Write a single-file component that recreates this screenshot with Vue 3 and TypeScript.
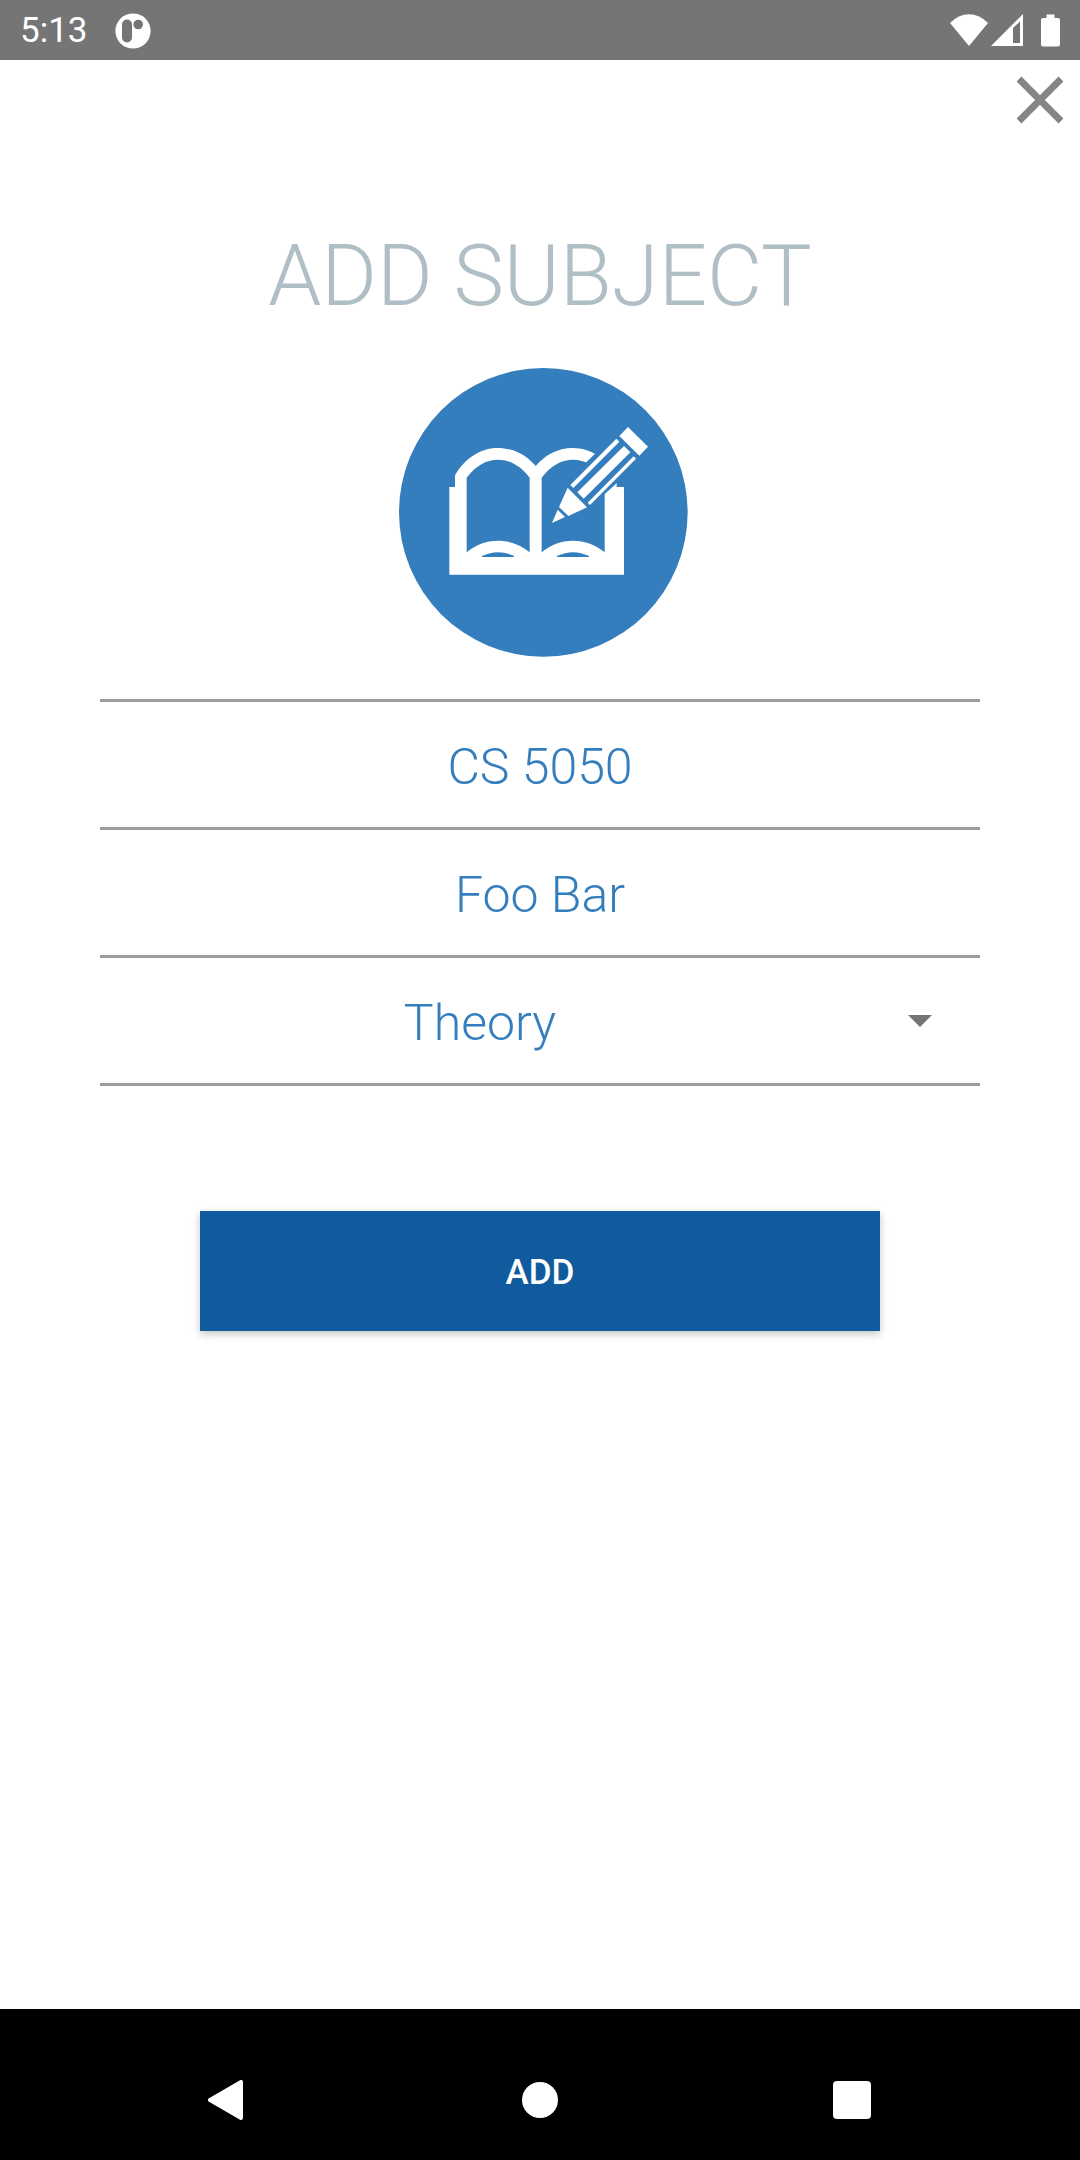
<script setup lang="ts">
import { ref } from 'vue'

const code = ref('CS 5050')
const name = ref('Foo Bar')
const kind = ref('Theory')
const kinds: string[] = ['Theory', 'Practical']
</script>

<template>
  <div class="screen">
    <header class="status">
      <span class="clock">5:13</span>
      <svg class="notice" viewBox="0 0 36 36" aria-hidden="true">
        <circle cx="18" cy="18" r="17.6" fill="#fff" />
        <rect x="7" y="6.5" width="10" height="23" rx="5" fill="#757575" />
        <circle cx="23.2" cy="11.5" r="4.8" fill="#757575" />
      </svg>
      <svg class="signals" viewBox="0 0 112 34" aria-hidden="true">
        <path d="M0 9Q8.500 0.200 19 0.200T38 9L19 32Z" fill="#fff" />
        <path fill-rule="evenodd" d="M41 32L73 0V32ZM63 14V29H70V7.500Z" fill="#fff" />
        <path d="M93 4H96.500V0.500H104.500V4H108Q110 4 110 6V30.500Q110 32.500 108 32.500H93Q91 32.500 91 30.500V6Q91 4 93 4Z" fill="#fff" />
      </svg>
    </header>

    <div class="toolbar">
      <button class="close" type="button" aria-label="Close">
        <svg viewBox="0 0 48 48" aria-hidden="true">
          <path d="M3 3L45 45M45 3L3 45" stroke="#858585" stroke-width="6.8" fill="none" />
        </svg>
      </button>
    </div>

    <main class="content">
      <h1>ADD SUBJECT</h1>
      <svg class="emblem" viewBox="0 0 900 900" aria-hidden="true">
        <circle cx="460" cy="457" r="433" fill="#357ebd" />
        <path d="M178 381H195V346C224 296 271 264 322 264C371 264 410 286 437 318C464 286 502 264 549 264C602 264 650 297 680 346V381H702V644H178Z" fill="#fff" />
        <g fill="#357ebd">
          <path d="M230 353C256 318 288 299 324 299C360 299 393 318 419 353V577C393 555 360 542 324 542C288 542 256 555 230 577Z" />
          <path d="M455 353C481 318 513 299 549 299C585 299 618 318 644 353V577C618 555 585 542 549 542C513 542 481 555 455 577Z" />
          <path d="M276 588Q324 565 372 588V591H276Z" />
          <path d="M501 588Q549 565 597 588V591H501Z" />
          <path d="M618 278L589 307L522 374L486 488L596 450L645 401L680 370L740 300L680 225Z" />
        </g>
        <g fill="#fff">
          <path d="M714 201L774 260L748 287L688 228Z" />
          <path d="M679 236L688 245L550 384L541 375Z" />
          <path d="M702 258L721 277L581 416L562 397Z" />
          <path d="M731 289L738 296L600 435L593 428Z" />
          <path d="M533 383L591 442L535 468L507 441Z" />
          <path d="M503 449L525 471L486 489Z" />
        </g>
      </svg>

      <form class="form" @submit.prevent>
        <div class="fields">
          <input v-model="code" class="field" type="text" aria-label="Subject code" />
          <input v-model="name" class="field" type="text" aria-label="Subject name" />
          <div class="picker">
            <select v-model="kind" class="field" aria-label="Subject type">
              <option v-for="k in kinds" :key="k" :value="k">{{ k }}</option>
            </select>
            <svg class="arrow" viewBox="0 0 24 12" aria-hidden="true">
              <path d="M0 0H24L12 12Z" fill="#757575" />
            </svg>
          </div>
        </div>
        <button class="add" type="submit">ADD</button>
      </form>
    </main>

    <nav class="navbar">
      <button type="button" aria-label="Back">
        <svg viewBox="0 0 40 40" aria-hidden="true">
          <path d="M33 2V38L2 20Z" fill="#fff" stroke="#fff" stroke-width="4" stroke-linejoin="round" />
        </svg>
      </button>
      <button type="button" aria-label="Home">
        <svg viewBox="0 0 40 40" aria-hidden="true"><circle cx="20" cy="20" r="18" fill="#fff" /></svg>
      </button>
      <button type="button" aria-label="Recent apps">
        <svg viewBox="0 0 40 40" aria-hidden="true"><rect x="1" y="1" width="38" height="38" rx="4" fill="#fff" /></svg>
      </button>
    </nav>
  </div>
</template>

<style>
body {
  margin: 0;
  background: #fff;
}
</style>

<style scoped>
.screen {
  display: flex;
  flex-direction: column;
  min-height: 100vh;
  font-family: Roboto, "Liberation Sans", sans-serif;
}

button {
  padding: 0;
  border: 0;
  background: none;
  font-family: inherit;
}

svg {
  display: block;
}

.status {
  display: flex;
  align-items: center;
  height: 60px;
  box-sizing: border-box;
  padding: 2px 18px 0 20px;
  background: #757575;
  color: #fff;
}

.clock {
  font-size: 35px;
  line-height: 58px;
}

.notice {
  width: 36px;
  height: 36px;
  margin-left: 27px;
}

.signals {
  width: 112px;
  height: 34px;
  margin-left: auto;
}

.toolbar {
  display: flex;
  justify-content: flex-end;
  padding: 16px 16px 0;
}

.close,
.close svg {
  width: 48px;
  height: 48px;
}

.content {
  display: flex;
  flex-direction: column;
  padding: 102px 100px 60px;
}

h1 {
  margin: 0;
  font-size: 85px;
  font-weight: 300;
  line-height: 100px;
  text-align: center;
  color: #b0bec5;
}

.emblem {
  width: 300px;
  height: 300px;
  margin: 34px auto 0;
}

.form {
  display: flex;
  flex-direction: column;
  margin-top: 39px;
}

.fields {
  display: flex;
  flex-direction: column;
  border-top: 3px solid #9e9e9e;
}

.field {
  display: block;
  width: 100%;
  height: 128px;
  box-sizing: border-box;
  margin: 0;
  padding: 5px 0 0;
  border: 0;
  border-bottom: 3px solid #9e9e9e;
  border-radius: 0;
  outline: 0;
  appearance: none;
  background: transparent;
  font-family: inherit;
  font-size: 50px;
  font-weight: 300;
  text-align: center;
  color: #357ebd;
}

.picker {
  position: relative;
}

.picker .field {
  padding-right: 120px;
  text-align-last: center;
}

.arrow {
  position: absolute;
  top: 57px;
  right: 48px;
  width: 24px;
  height: 12px;
  pointer-events: none;
}

.add {
  height: 120px;
  margin: 125px 100px 0;
  padding-top: 2px;
  background: #105a9e;
  box-shadow: 0 3px 8px rgba(0, 0, 0, 0.24);
  font-size: 35px;
  font-weight: 500;
  color: #fff;
}

.navbar {
  display: flex;
  justify-content: center;
  gap: 272px;
  margin-top: auto;
  padding: 71px 0 40px;
  background: #000;
}

.navbar button,
.navbar svg {
  width: 40px;
  height: 40px;
}
</style>
